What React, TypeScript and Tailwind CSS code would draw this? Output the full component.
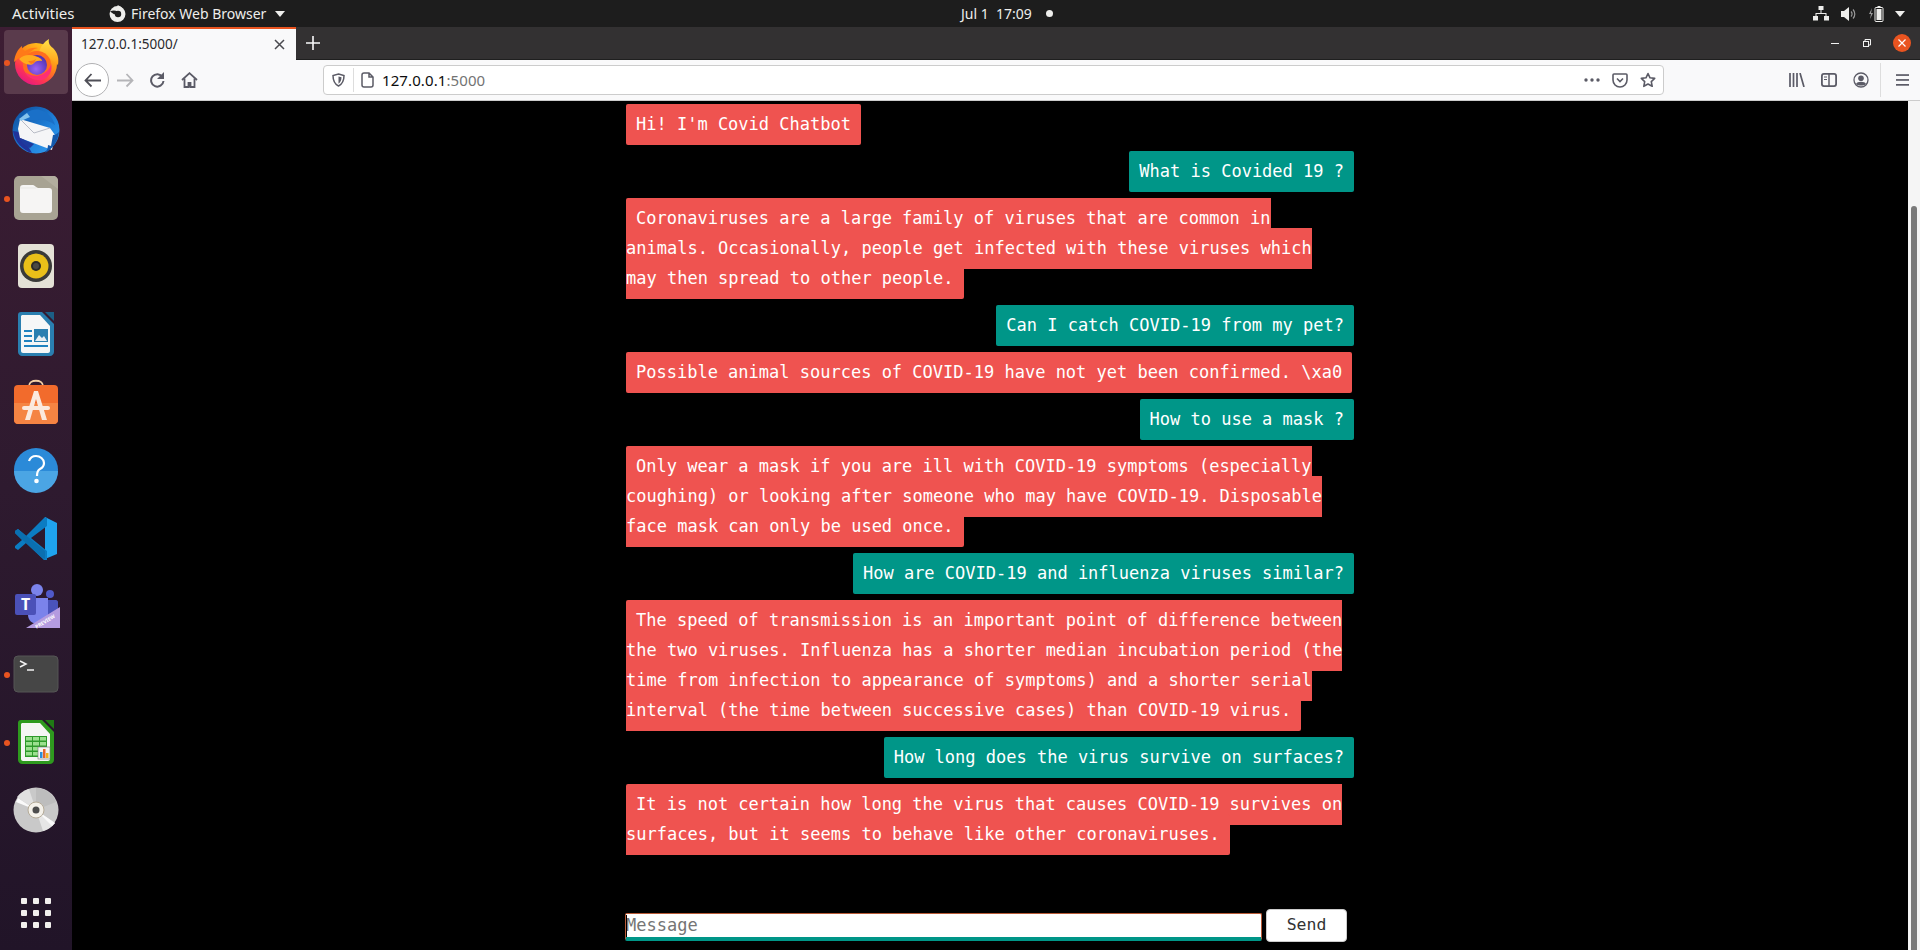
import React from "react";

const UI = { fontFamily: '"Noto Sans", "Open Sans", sans-serif' };
const MONO = { fontFamily: '"DejaVu Sans Mono", monospace' };

const messages: [string, string][] = [
  ["bot", "Hi! I'm Covid Chatbot"],
  ["me", "What is Covided 19 ?"],
  ["bot", " Coronaviruses are a large family of viruses that are common in animals. Occasionally, people get infected with these viruses which may then spread to other people. "],
  ["me", "Can I catch COVID-19 from my pet?"],
  ["bot", "Possible animal sources of COVID-19 have not yet been confirmed. \\xa0"],
  ["me", "How to use a mask ?"],
  ["bot", " Only wear a mask if you are ill with COVID-19 symptoms (especially coughing) or looking after someone who may have COVID-19. Disposable face mask can only be used once. "],
  ["me", "How are COVID-19 and influenza viruses similar?"],
  ["bot", " The speed of transmission is an important point of difference between the two viruses. Influenza has a shorter median incubation period (the time from infection to appearance of symptoms) and a shorter serial interval (the time between successive cases) than COVID-19 virus. "],
  ["me", "How long does the virus survive on surfaces?"],
  ["bot", " It is not certain how long the virus that causes COVID-19 survives on surfaces, but it seems to behave like other coronaviruses. "],
];

function Firefox() {
  return (
    <svg width="46" height="46" viewBox="0 0 46 46">
      <defs>
        <linearGradient id="ffa" x1="0.85" y1="0.05" x2="0.25" y2="1">
          <stop offset="0" stopColor="#ffd21e" />
          <stop offset="0.4" stopColor="#ff8a16" />
          <stop offset="0.72" stopColor="#ff3750" />
          <stop offset="1" stopColor="#e31587" />
        </linearGradient>
        <linearGradient id="ffy" x1="0.6" y1="0" x2="0.5" y2="1">
          <stop offset="0" stopColor="#ffe44a" />
          <stop offset="1" stopColor="#ff9a14" />
        </linearGradient>
        <radialGradient id="ffb" cx="0.45" cy="0.7" r="0.7">
          <stop offset="0" stopColor="#9a63f5" />
          <stop offset="1" stopColor="#4b2fb0" />
        </radialGradient>
      </defs>
      <circle cx="23" cy="25" r="21" fill="url(#ffa)" />
      <path d="M26 14C27 8 31 3 36 0c-1 4 1 7 4 9 5 5 6 11 5 17-3-3-8-8-19-12z" fill="url(#ffy)" />
      <path d="M1 23C2 15 5 10 9 7c0 3 1 4 3 5 4-3 9-4 13-3-5 1-9 4-11 8-5 0-9 2-13 6z" fill="#ff7a18" />
      <circle cx="24" cy="26" r="14" fill="#ff6d1f" />
      <path d="M38 24c2 8-2 15-9 17-7 1-14-2-17-8 5 4 12 5 18 2 5-3 8-7 8-11z" fill="#ff2f74" />
      <circle cx="24" cy="26" r="10" fill="url(#ffb)" />
      <path d="M6 20c4-4 10-5 16-3 4 1 7 3 7 5-4-1-7 0-9 3-1 1-4 1-7 0-3-1-5-3-7-5z" fill="#ffac1e" />
      <path d="M15 22c2 0 5 0 8-2l-2 4-3 1z" fill="#ff7a18" />
    </svg>
  );
}

function Thunderbird() {
  return (
    <svg width="48" height="50" viewBox="0 0 48 50">
      <defs>
        <linearGradient id="tb" x1="0.1" y1="0" x2="0.95" y2="0.9">
          <stop offset="0" stopColor="#0d4f9e" />
          <stop offset="0.6" stopColor="#1f7fd8" />
          <stop offset="1" stopColor="#2f9bf0" />
        </linearGradient>
      </defs>
      <circle cx="24" cy="25" r="23.500" fill="url(#tb)" />
      <path d="M1 26c2 11 9 19 19 22l-7-12-6-9z" fill="#20339a" />
      <path d="M8 15C12 8 20 3 28 5c8 2 13 8 15 15-5-4-12-6-17-5z" fill="#1a70c8" />
      <path d="M8 14l30 9 5 7-3 15L8 33l-2-9z" fill="#f5f5f7" />
      <path d="M8 14l14 14 16-5" fill="none" stroke="#a9adba" strokeWidth="0.8" />
      <path d="M7 14l8-6 3 4-9 4z" fill="#86c3ec" />
      <path d="M41 30c2 0 4-1 6-3-1 9-6 17-14 21 2-3 3-5 3-8l3 1z" fill="#1459ad" />
      <path d="M8 33l14 6-4 4C13 41 9 37 8 33z" fill="#1e3a9e" />
    </svg>
  );
}

function Files() {
  return (
    <svg width="46" height="46" viewBox="0 0 46 46">
      <rect x="1" y="1" width="44" height="44" rx="5" fill="#a8a393" />
      <path d="M28 1h12c3 0 5 2 5 5v8z" fill="#b3ae9f" />
      <path d="M7 13c0-2 1-3 3-3h10c1 0 2 1 3 2l2 1h11c2 0 3 1 3 3v19c0 2-1 3-3 3H10c-2 0-3-1-3-3z" fill="#f6f5f4" />
      <path d="M7 13h16" stroke="#e2e0dc" strokeWidth="0.6" />
    </svg>
  );
}

function Rhythmbox() {
  return (
    <svg width="38" height="46" viewBox="0 0 38 46">
      <rect x="1" y="1" width="36" height="44" rx="4" fill="#e4e1d6" />
      <circle cx="19" cy="23" r="16" fill="#3a3a38" />
      <circle cx="19" cy="23" r="12.500" fill="#e9bf19" />
      <circle cx="19" cy="23" r="5" fill="#2b2a26" />
      <circle cx="19" cy="23" r="3" fill="#4a4944" />
    </svg>
  );
}

function Writer() {
  return (
    <svg width="38" height="46" viewBox="0 0 38 46">
      <path d="M4 1h21l12 12v28c0 2-2 4-4 4H5c-2 0-4-2-4-4V4c0-2 1-3 3-3z" fill="#2a7fb0" />
      <path d="M5 4h18l10 11v25c0 1-1 2-2 2H6c-1 0-2-1-2-2V5z" fill="#f6f7f7" />
      <path d="M28 1h9v9z" fill="#1c5f86" />
      <rect x="7" y="19" width="8" height="2" fill="#1f82bf" />
      <rect x="7" y="24" width="8" height="2" fill="#1f82bf" />
      <rect x="7" y="29" width="8" height="2" fill="#1f82bf" />
      <rect x="7" y="34" width="24" height="2" fill="#1f82bf" />
      <rect x="17" y="18" width="14" height="13" fill="#2a7fb0" />
      <path d="M18 30l4-6 3 3 2-2 3 5z" fill="#e8eef2" />
    </svg>
  );
}

function Store() {
  return (
    <svg width="46" height="46" viewBox="0 0 46 46">
      <path d="M16 7c0-7 14-7 14 0" fill="none" stroke="#f2cfa5" strokeWidth="1.800" />
      <rect x="1" y="6" width="44" height="39" rx="4" fill="#f26b2c" />
      <path d="M1 24h44v17c0 2-2 4-4 4H5c-2 0-4-2-4-4z" fill="#f58443" />
      <path d="M21 12h4l9 29h-5l-6-21-6 21h-5z" fill="#fbe9de" />
      <rect x="9" y="27" width="28" height="4" rx="2" fill="#fbe9de" />
    </svg>
  );
}

function Help() {
  return (
    <svg width="46" height="46" viewBox="0 0 46 46">
      <circle cx="23" cy="23" r="22" fill="#2b8ad8" />
      <path d="M1 24h44a22 22 0 0 1-44 0z" fill="#4ba5e4" />
      <path d="M16 14c1-3 4-5 7-5 4 0 8 3 8 7 0 3-2 5-4 6-2 1-3 3-3 7" fill="none" stroke="#fff" strokeWidth="2.200" />
      <circle cx="23.500" cy="34" r="2.300" fill="#fff" />
    </svg>
  );
}

function VSCode() {
  return (
    <svg width="44" height="44" viewBox="0 0 44 44">
      <path d="M31 1l12 6v31l-12 5z" fill="#1fa3ee" />
      <path d="M31 1L12 20 4 13 1 15v2l7 7-7 6v2l3 2 8-7 19 18 2-1v-9L17 22 33 10V2z" fill="#0b7cc2" />
      <path d="M1 15l3-2 27 22v8l-5-3L1 17z" fill="#0a6fb0" />
    </svg>
  );
}

function Teams() {
  return (
    <svg width="48" height="46" viewBox="0 0 48 46">
      <circle cx="25" cy="7" r="6" fill="#7b83eb" />
      <circle cx="38" cy="11" r="4" fill="#5059c9" />
      <path d="M32 17h12c1 0 2 1 2 2v11l-14 3z" fill="#4a53bb" />
      <path d="M16 15h20v17c0 6-4 9-10 9s-10-4-10-9z" fill="#7b83eb" />
      <rect x="3" y="11" width="21" height="21" rx="2" fill="#4b51b8" />
      <text x="13.500" y="27" textAnchor="middle" fontSize="16" fontWeight="700" fill="#fff" style={UI}>T</text>
      <path d="M48 24v21H14z" fill="#b49be0" />
      <text x="34" y="40" textAnchor="middle" fontSize="5" fontWeight="700" fill="#fff" transform="rotate(-31 34 40)" style={UI}>PREVIEW</text>
    </svg>
  );
}

function TerminalIcon() {
  return (
    <svg width="46" height="38" viewBox="0 0 46 38">
      <rect x="1" y="1" width="44" height="36" rx="4" fill="#464646" stroke="#555" />
      <path d="M7 6l6 3-6 3" fill="none" stroke="#f2f2f2" strokeWidth="1.500" />
      <path d="M14 15h7" stroke="#f2f2f2" strokeWidth="1.500" />
    </svg>
  );
}

function Calc() {
  return (
    <svg width="38" height="46" viewBox="0 0 38 46">
      <path d="M4 1h21l12 12v28c0 2-2 4-4 4H5c-2 0-4-2-4-4V4c0-2 1-3 3-3z" fill="#2e9a1e" />
      <path d="M5 4h18l10 11v25c0 1-1 2-2 2H6c-1 0-2-1-2-2V5z" fill="#f5f6f4" />
      <path d="M28 1h9v9z" fill="#1f7a14" />
      <rect x="8" y="17" width="22" height="21" fill="#2d9a2a" />
      <g fill="#9be08e">
        <rect x="9" y="18" width="6" height="3.500" />
        <rect x="16" y="18" width="6" height="3.500" />
        <rect x="23" y="18" width="6" height="3.500" />
        <rect x="9" y="23" width="6" height="3.500" />
        <rect x="16" y="23" width="6" height="3.500" />
        <rect x="23" y="23" width="6" height="3.500" />
        <rect x="9" y="28" width="6" height="3.500" />
        <rect x="16" y="28" width="6" height="3.500" />
        <rect x="9" y="33" width="6" height="3.500" />
        <rect x="16" y="33" width="6" height="3.500" />
      </g>
      <rect x="21" y="28" width="12" height="12" fill="#f4f4f4" stroke="#777" strokeWidth="0.6" />
      <rect x="23" y="33" width="2.500" height="6" fill="#2d8fd8" />
      <rect x="26" y="30" width="2.500" height="9" fill="#e8662a" />
      <rect x="29" y="34" width="2.500" height="5" fill="#f2b21e" />
    </svg>
  );
}

function Disc() {
  return (
    <svg width="46" height="46" viewBox="0 0 46 46">
      <circle cx="23" cy="23" r="22.500" fill="#c9c9c9" />
      <path d="M23 23L4 10a22 22 0 0 1 12-8z" fill="#e0e0e0" />
      <path d="M23 23L5 11 3 15z" fill="#fafafa" />
      <path d="M23 23l19 13a22 22 0 0 1-12 8z" fill="#e6e6e6" />
      <path d="M23 23l16 16 3-3z" fill="#fafafa" />
      <path d="M23 23V1a22 22 0 0 1 20 14z" fill="#bdbdbd" />
      <circle cx="23" cy="23" r="8" fill="#f4f1ea" stroke="#b5ab98" />
      <circle cx="23" cy="23" r="3.500" fill="#4d4d4d" />
    </svg>
  );
}

function Grid() {
  return (
    <svg width="30" height="30" viewBox="0 0 30 30" fill="#f1efed">
      {[0, 12, 24].map((y) =>
        [0, 12, 24].map((x) => <rect key={`${x}-${y}`} x={x} y={y} width="6" height="6" rx="1" />)
      )}
    </svg>
  );
}

function Dock({ children, dot, active }: { children: React.ReactNode; dot?: boolean; active?: boolean }) {
  return (
    <div className="relative h-[68px] w-[72px] flex items-center justify-center">
      {active && <div className="absolute left-[4px] top-[2px] w-[64px] h-[64px] rounded-[4px] bg-[#5a3b4c]" />}
      {dot && <div className="absolute left-[4px] top-[32px] w-[6px] h-[6px] rounded-full bg-[#e95420]" />}
      <div className="relative flex">{children}</div>
    </div>
  );
}

const G = "#5b5b66";

function ToolBtn({ children, w = 32 }: { children: React.ReactNode; w?: number }) {
  return (
    <div className="flex items-center justify-center shrink-0" style={{ width: w }}>
      {children}
    </div>
  );
}

export default function App() {
  return (
    <div className="w-[1920px] h-[950px] flex flex-col overflow-hidden bg-black">
      {/* GNOME top bar */}
      <div className="h-[27px] shrink-0 bg-[#1d1d1d] text-[#eeeeec] text-[14px] flex items-center relative" style={UI}>
        <span className="ml-[12px] w-[62px] text-[15px] whitespace-nowrap">Activities</span>
        <svg className="ml-[35px]" width="17" height="17" viewBox="0 0 16 16">
          <circle cx="8" cy="8.500" r="7.500" fill="#eeeeec" />
          <circle cx="8.500" cy="8.500" r="3" fill="#1d1d1d" />
          <path d="M1 6c2-1 5-1 7 0L5 9z" fill="#1d1d1d" />
          <path d="M8 0c2 1 4 2 5 4L9 5z" fill="#eeeeec" />
        </svg>
        <span className="ml-[5px] w-[138px] whitespace-nowrap">Firefox Web Browser</span>
        <svg className="ml-[6px]" width="10" height="6" viewBox="0 0 10 6"><path d="M0 0h10L5 6z" fill="#eeeeec" /></svg>
        <div className="absolute left-[961px] top-0 h-[27px] flex items-center">
          <span className="whitespace-pre">Jul 1  17:09</span>
          <span className="ml-[14px] w-[7px] h-[7px] rounded-full bg-[#eeeeec]" />
        </div>
        <div className="ml-auto flex items-center">
          <svg width="16" height="15" viewBox="0 0 16 15" fill="#eeeeec">
            <rect x="5.500" y="0" width="5" height="4" />
            <rect x="0" y="10" width="5" height="4.500" />
            <rect x="11" y="10" width="5" height="4.500" />
            <path d="M7.500 4h1v3h5v3h-1V8h-9v2h-1V7h5z" />
          </svg>
          <svg className="ml-[12px]" width="15" height="14" viewBox="0 0 15 14">
            <path d="M0 4h3l5-4v14l-5-4H0z" fill="#eeeeec" />
            <path d="M10 4.500a3.500 3.500 0 0 1 0 5M12 2.500a6.500 6.500 0 0 1 0 9" fill="none" stroke="#9a9a9a" strokeWidth="1.200" />
          </svg>
          <svg className="ml-[13px]" width="15" height="16" viewBox="0 0 15 16">
            <path d="M3 2L0 8h2l-1 5 3-6H2z" fill="#9a9a9a" />
            <rect x="6" y="1.500" width="8" height="14" rx="1" fill="none" stroke="#eeeeec" />
            <rect x="8.500" y="0" width="3" height="1.500" fill="#eeeeec" />
            <rect x="7.500" y="3" width="5" height="11" fill="#eeeeec" />
          </svg>
          <svg className="ml-[11px] mr-[15px]" width="10" height="6" viewBox="0 0 10 6"><path d="M0 0h10L5 6z" fill="#eeeeec" /></svg>
        </div>
      </div>

      <div className="flex-1 flex min-h-0">
        {/* Dock */}
        <div className="w-[72px] shrink-0 flex flex-col pt-px pb-[3px] bg-gradient-to-b from-[#3d1d33] via-[#2e1a2f] to-[#211428]">
          <Dock dot active><Firefox /></Dock>
          <Dock><Thunderbird /></Dock>
          <Dock dot><Files /></Dock>
          <Dock><Rhythmbox /></Dock>
          <Dock><Writer /></Dock>
          <Dock><Store /></Dock>
          <Dock><Help /></Dock>
          <Dock><VSCode /></Dock>
          <Dock><Teams /></Dock>
          <Dock dot><TerminalIcon /></Dock>
          <Dock dot><Calc /></Dock>
          <Dock><Disc /></Dock>
          <div className="mt-auto"><Dock><Grid /></Dock></div>
        </div>

        <div className="flex-1 flex flex-col min-w-0">
          {/* Tab strip */}
          <div className="h-[33px] shrink-0 bg-[#333132] flex items-stretch border-b border-[#1f1f1f]">
            <div className="w-[224px] bg-[#f9f9fa] border-t-2 border-[#e95420] flex items-center pl-[9px] pr-[10px] -mb-px">
              <span className="text-[13.500px] text-[#2a2a2e]" style={UI}>127.0.0.1:5000/</span>
              <svg className="ml-auto mr-[1px]" width="11" height="11" viewBox="0 0 11 11"><path d="M1 1l9 9M10 1l-9 9" stroke="#4a4a4f" strokeWidth="1.500" /></svg>
            </div>
            <div className="ml-[10px] flex items-center">
              <svg width="14" height="14" viewBox="0 0 14 14"><path d="M7 0v14M0 7h14" stroke="#f9f9fa" strokeWidth="1.600" /></svg>
            </div>
            <div className="ml-auto flex items-center">
              <div className="w-[8px] h-px bg-[#f2f2f2]" />
              <svg className="ml-[24px]" width="8" height="8" viewBox="0 0 8 8"><path d="M2 2V.5h5.500V6H6" fill="none" stroke="#f2f2f2" /><rect x=".5" y="2.500" width="5" height="5" fill="none" stroke="#f2f2f2" /></svg>
              <div className="ml-[22px] mr-[9px] w-[18px] h-[18px] rounded-full bg-[#e95420] flex items-center justify-center">
                <svg width="8" height="8" viewBox="0 0 8 8"><path d="M.5.5l7 7M7.500.5l-7 7" stroke="#fff" strokeWidth="1.200" /></svg>
              </div>
            </div>
          </div>

          {/* Nav toolbar */}
          <div className="h-[41px] shrink-0 bg-[#f9f9fa] border-b border-[#cccccc] flex items-center pl-[3px]">
            <div className="w-[34px] h-[34px] rounded-full border border-[#b1b1b3] bg-white flex items-center justify-center shrink-0">
              <svg width="17" height="15" viewBox="0 0 17 15"><path d="M7.500 1L1.500 7.500l6 6M1.500 7.500H17" fill="none" stroke="#4f4f57" strokeWidth="1.800" /></svg>
            </div>
            <div className="w-[32px] flex items-center justify-center shrink-0">
              <svg width="17" height="15" viewBox="0 0 17 15"><path d="M9.500 1l6 6.500-6 6M15.500 7.500H0" fill="none" stroke="#b5b5b8" strokeWidth="1.800" /></svg>
            </div>
            <ToolBtn>
              <svg width="16" height="16" viewBox="0 0 16 16"><path d="M13.500 5A6.200 6.200 0 1 0 14.500 9" fill="none" stroke={G} strokeWidth="2" /><path d="M15 0v7H8z" fill={G} /></svg>
            </ToolBtn>
            <ToolBtn>
              <svg width="17" height="16" viewBox="0 0 17 16">
                <path d="M1 8L8.500 1.200 16 8" fill="none" stroke={G} strokeWidth="1.800" />
                <path d="M3.500 6.500V15h4v-4h2v4h4V6.500" fill="none" stroke={G} strokeWidth="1.800" />
                <rect x="7" y="10" width="3" height="5" fill={G} />
              </svg>
            </ToolBtn>
            <div className="ml-[118px] w-[1341px] h-[30px] shrink-0 bg-white border border-[#cccccc] rounded-[4px] flex items-center">
              <svg className="ml-[8px]" width="13" height="14" viewBox="0 0 13 14">
                <path d="M6.500 1L12 2.500c0 5-1.500 8.500-5.500 10.500C2.500 11 1 7.500 1 2.500z" fill="none" stroke={G} strokeWidth="1.500" />
                <path d="M6.500 3.500L9.500 4.300c0 3-1 5-3 6.500z" fill={G} />
              </svg>
              <div className="ml-[8px] w-px h-[24px] bg-[#dddddd]" />
              <svg className="ml-[7px]" width="13" height="16" viewBox="0 0 13 16"><path d="M8 1H3a2 2 0 0 0-2 2v10a2 2 0 0 0 2 2h7a2 2 0 0 0 2-2V5zM8 1v4h4" fill="none" stroke={G} strokeWidth="1.500" /></svg>
              <span className="ml-[8px] text-[15px] tracking-[0.1px]" style={UI}>
                <span className="text-[#0c0c0d]">127.0.0.1</span>
                <span className="text-[#737373]">:5000</span>
              </span>
              <div className="ml-auto flex items-center pr-[7px]">
                <svg width="16" height="4" viewBox="0 0 16 4" fill={G}><circle cx="2" cy="2" r="1.700" /><circle cx="8" cy="2" r="1.700" /><circle cx="14" cy="2" r="1.700" /></svg>
                <svg className="ml-[12px]" width="16" height="15" viewBox="0 0 16 15"><path d="M2 1h12c.6 0 1 .4 1 1v5a7 7 0 0 1-14 0V2c0-.6.4-1 1-1zM5 5.500l3 3 3-3" fill="none" stroke={G} strokeWidth="1.600" /></svg>
                <svg className="ml-[12px]" width="16" height="16" viewBox="0 0 16 16"><path d="M8 1.500l2 4.300 4.700.6-3.400 3.200.9 4.700L8 12l-4.200 2.300.9-4.700L1.300 6.400 6 5.800z" fill="none" stroke={G} strokeWidth="1.600" strokeLinejoin="round" /></svg>
              </div>
            </div>
            <div className="ml-[125px] flex items-center shrink-0">
              <svg width="16" height="14" viewBox="0 0 16 14"><path d="M1 0v14M4.500 0v14M8 0v14M11 0l4 14" fill="none" stroke={G} strokeWidth="1.700" /></svg>
              <svg className="ml-[16px]" width="16" height="14" viewBox="0 0 16 14">
                <rect x=".9" y=".9" width="14.200" height="12.200" rx="2" fill="none" stroke={G} strokeWidth="1.800" />
                <path d="M8 1v12" stroke={G} strokeWidth="1.500" />
                <path d="M3 4h3M3 6.500h3" stroke={G} strokeWidth="1" />
              </svg>
              <svg className="ml-[16px]" width="16" height="16" viewBox="0 0 16 16"><circle cx="8" cy="8" r="7" fill="none" stroke={G} strokeWidth="1.300" /><circle cx="8" cy="6.300" r="2.800" fill={G} /><path d="M3 12c1-3 9-3 10 0-2 2-8 2-10 0z" fill={G} /></svg>
              <div className="ml-[11px] w-px h-[34px] bg-[#dddddd]" />
              <svg className="ml-[15px]" width="13" height="12" viewBox="0 0 13 12" fill={G}><rect width="13" height="1.700" y=".2" /><rect width="13" height="1.700" y="5.100" /><rect width="13" height="1.700" y="10" /></svg>
            </div>
          </div>

          {/* Page */}
          <div className="flex-1 flex min-h-0">
            <div className="flex-1 bg-black flex justify-center min-w-0">
              <div className="w-[728px] flex flex-col pt-[8px] pb-[8px]" style={MONO}>
                {messages.map(([who, text], i) =>
                  who === "bot" ? (
                    <div key={i} className="w-[726.300px] mb-[17px] text-[17px] leading-[30px] text-left text-white">
                      <span className="bg-[#ef5350] px-[10px] pt-[10px] pb-[11px] rounded-[2px]">{text}</span>
                    </div>
                  ) : (
                    <div key={i} className="mb-[17px] text-[17px] leading-[30px] text-right text-white">
                      <span className="bg-[#009688] px-[10px] pt-[10px] pb-[11px] rounded-[2px]">{text}</span>
                    </div>
                  )
                )}
                <div className="mt-auto flex items-end h-[33px] -ml-px">
                  <div className="relative w-[637px] h-[28px] mb-px">
                    <input
                      readOnly
                      placeholder="Message"
                      className="w-full h-full bg-white border border-[#b85a36] border-b-[4px] border-b-[#009688] rounded-[2px] text-[17px] outline-none placeholder:text-[#757575] pl-0 pb-[2px]"
                      style={MONO}
                    />
                    <div className="absolute left-[1px] top-[2px] w-px h-[22px] bg-black" />
                  </div>
                  <button className="ml-[4px] w-[81px] h-[33px] bg-white border border-[#cccccc] rounded-[4px] text-[16.500px] text-[#333333]" style={MONO}>
                    Send
                  </button>
                </div>
              </div>
            </div>
            <div className="w-[12px] shrink-0 bg-[#f5f5f5] flex justify-center pt-[105px]">
              <div className="w-[6px] h-full rounded-t-[3px] bg-[#7a7a7a]" />
            </div>
          </div>
        </div>
      </div>
    </div>
  );
}
